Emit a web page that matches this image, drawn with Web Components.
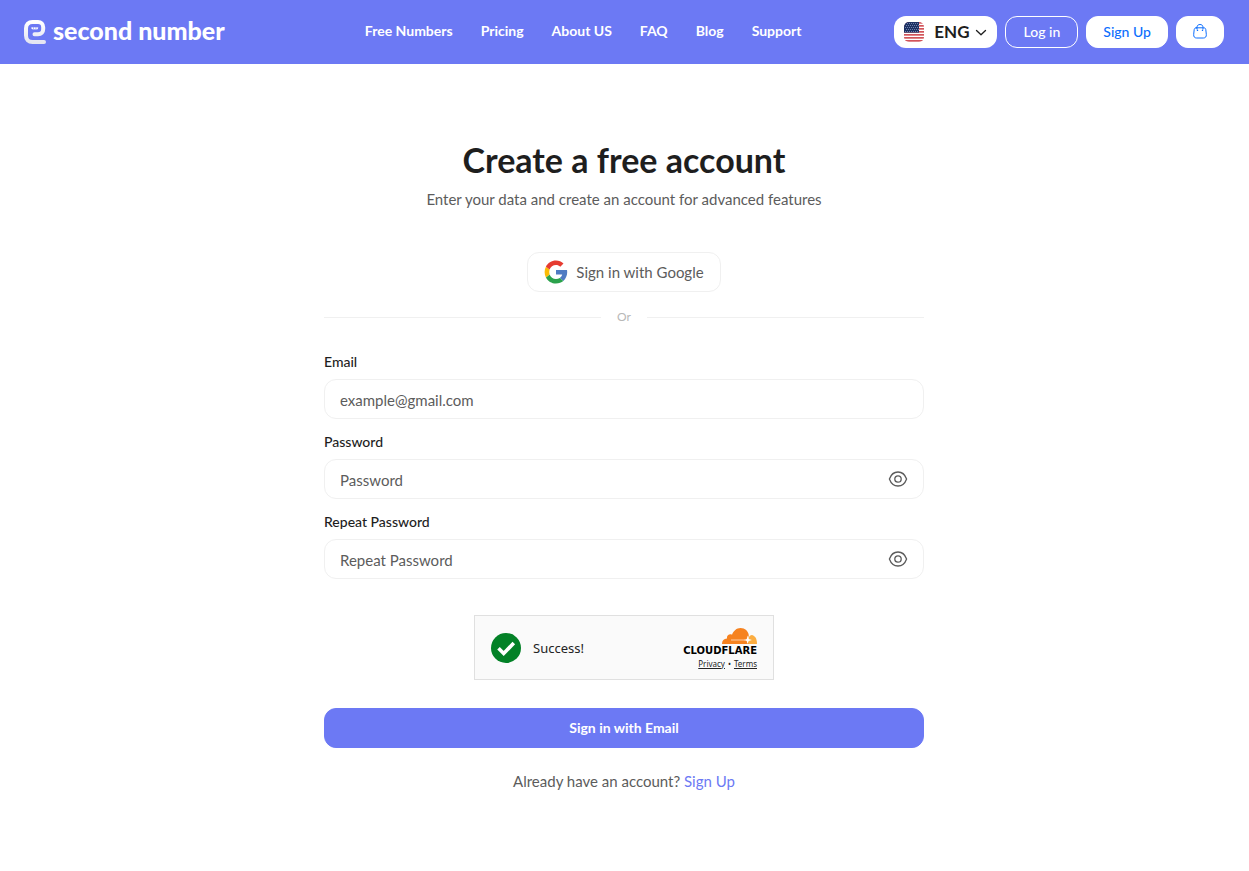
<!DOCTYPE html>
<html lang="en">
<head>
<meta charset="UTF-8">
<meta name="viewport" content="width=device-width, initial-scale=1">
<title>Create a free account</title>
<style>
    :root {
        --primary: #6c79f4;
        --link: #0d6efd;
        --text: #1e1e1e;
        --muted: #5c5c5c;
        --border: #f0f0f0;
        --radius: 12px;
    }

    body {
        margin: 0;
        background: #fff;
        color: var(--text);
        font-family: Lato, "Liberation Sans", sans-serif;
        font-size: 15px;
        font-weight: 400;
        line-height: 20px;
    }
</style>
</head>
<body>
<site-header>
    <a href="#numbers">Free Numbers</a>
    <a href="#pricing">Pricing</a>
    <a href="#about">About US</a>
    <a href="#faq">FAQ</a>
    <a href="#blog">Blog</a>
    <a href="#support">Support</a>
</site-header>
<sign-up-page>
    <span slot="title">Create a free account</span>
    <span slot="subtitle">Enter your data and create an account for advanced features</span>
</sign-up-page>

<script>
// ==================== SiteLogo ====================

class SiteLogo extends HTMLElement {
    constructor() {
        super();
        this.attachShadow({ mode: 'open' });
        this.shadowRoot.innerHTML = `
            <style>
                :host { display: block; }
                a {
                    display: flex;
                    align-items: center;
                    gap: 7px;
                    color: #fff;
                    font-size: 25px;
                    font-weight: 900;
                    line-height: 32px;
                    text-decoration: none;
                    white-space: nowrap;
                }
                svg { flex: none; }
                span { padding-bottom: 4px; }
            </style>
            <a href="#home">
                <svg width="22" height="24" viewBox="0 0 22 24" fill="none" aria-hidden="true">
                    <defs>
                        <linearGradient id="mark" x1="0" y1="0" x2="0" y2="1">
                            <stop offset="0" stop-color="#fff"/>
                            <stop offset="1" stop-color="#e4e5f2"/>
                        </linearGradient>
                    </defs>
                    <path d="M20 22H8.500C4.500 22 2 19.500 2 15.500V8.500C2 4.500 4.500 2 8.500 2H14C17 2 19.200 4.200 19.200 7.300V9C19.200 12.200 17.200 14.300 14 14.300H10.500" stroke="url(#mark)" stroke-width="4" stroke-linecap="round"/>
                    <path d="M7 7.300H14.500L13.300 9.800H8.500Z" fill="#fff" opacity=".5"/>
                    <path d="M7.600 8.300h1.400M10 8.300h1.400M12.400 8.300h1.400" stroke="#fff" stroke-width="1.500"/>
                </svg>
                <span>second number</span>
            </a>
        `;
    }
}

// ==================== LanguageSelect ====================

class LanguageSelect extends HTMLElement {
    constructor() {
        super();
        this.attachShadow({ mode: 'open' });

        let stripes = '';
        for (let i = 0; i < 7; i++) {
            stripes += `<rect y="${i * 3}" width="20" height="1.7" fill="#d2545a"/>`;
        }
        let stars = '';
        for (let y = 1; y < 10; y += 2) {
            for (let x = y % 4 === 1 ? 1 : 2; x < 15; x += 2) {
                stars += `<rect x="${x}" y="${y}" width="1" height="1"/>`;
            }
        }

        this.shadowRoot.innerHTML = `
            <style>
                :host {
                    display: flex;
                    align-items: center;
                    box-sizing: border-box;
                    width: 103px;
                    height: 32px;
                    padding: 0 10px;
                    border-radius: var(--radius);
                    background: #fff;
                }
                svg { flex: none; pointer-events: none; }
                select {
                    flex: 1;
                    min-width: 0;
                    height: 32px;
                    margin: 0;
                    padding: 0 0 0 10px;
                    border: 0;
                    appearance: none;
                    background: none;
                    color: var(--text);
                    font: inherit;
                    font-size: 17px;
                    font-weight: 700;
                    cursor: pointer;
                }
            </style>
            <svg width="20" height="20" viewBox="0 0 20 20" aria-hidden="true">
                <clipPath id="round"><rect width="20" height="20" rx="5"/></clipPath>
                <g clip-path="url(#round)">
                    <rect width="20" height="20" fill="#fff"/>
                    ${stripes}
                    <rect width="15" height="10.600" fill="#1d3264"/>
                    <g fill="#6f80ad">${stars}</g>
                </g>
            </svg>
            <select aria-label="Language">
                <option>ENG</option>
            </select>
            <svg width="12" height="12" viewBox="0 0 12 12" fill="none" aria-hidden="true">
                <path d="M1.500 4.500 6 8.800 10.500 4.500" stroke="#1e1e1e" stroke-width="1.300" stroke-linecap="round" stroke-linejoin="round"/>
            </svg>
        `;
    }
}

// ==================== SiteHeader ====================

class SiteHeader extends HTMLElement {
    constructor() {
        super();
        this.attachShadow({ mode: 'open' });
        this.shadowRoot.innerHTML = `
            <style>
                :host { display: block; background: var(--primary); }
                header {
                    display: flex;
                    align-items: center;
                    justify-content: space-between;
                    gap: 16px;
                    min-height: 64px;
                    padding: 0 25px 0 24px;
                }
                site-logo { min-width: 248px; }
                nav {
                    display: flex;
                    gap: 28px;
                    padding-bottom: 2px;
                }
                ::slotted(a) {
                    color: #fff;
                    font-size: 14px;
                    font-weight: 700;
                    text-decoration: none;
                    white-space: nowrap;
                }
                .actions {
                    display: flex;
                    gap: 8px;
                }
                .btn {
                    display: flex;
                    align-items: center;
                    justify-content: center;
                    box-sizing: border-box;
                    min-width: 48px;
                    height: 32px;
                    padding: 0 16px;
                    border: 1px solid #fff;
                    border-radius: var(--radius);
                    background: #fff;
                    color: var(--link);
                    font: inherit;
                    font-size: 14px;
                    font-weight: 500;
                    text-decoration: none;
                    white-space: nowrap;
                    cursor: pointer;
                }
                .outline {
                    min-width: 73px;
                    background: transparent;
                    color: #fff;
                }
            </style>
            <header>
                <site-logo></site-logo>
                <nav><slot></slot></nav>
                <div class="actions">
                    <language-select></language-select>
                    <a class="btn outline" href="#login">Log in</a>
                    <a class="btn" href="#signup">Sign Up</a>
                    <button class="btn" type="button" aria-label="Cart">
                        <svg width="14" height="16" viewBox="0 0 14 16" fill="none" stroke="currentColor" stroke-linecap="round" stroke-linejoin="round">
                            <path d="M3.200 3.800H10.800C12 3.800 12.600 4.500 12.800 5.600L13.300 10.300C13.500 12.800 12.500 14 10.300 14H3.700C1.500 14 .5 12.800 .7 10.300L1.200 5.600C1.400 4.500 2 3.800 3.200 3.800Z"/>
                            <path d="M4 5V3.400C4 1.500 5.200.5 7 .5S10 1.500 10 3.400V5"/>
                            <path d="M4.500 6.200v.2M9.500 6.200v.2" stroke-width="1.400"/>
                        </svg>
                    </button>
                </div>
            </header>
        `;
    }
}

// ==================== FormField ====================

class FormField extends HTMLElement {
    connectedCallback() {
        if (this.shadowRoot) return;
        this.attachShadow({ mode: 'open' });
        const type = this.getAttribute('type') || 'text';
        const isPassword = type === 'password';

        this.shadowRoot.innerHTML = `
            <style>
                :host { display: block; }
                label {
                    display: block;
                    margin-bottom: 6px;
                    font-size: 14px;
                    font-weight: 500;
                    line-height: 22px;
                }
                .box {
                    display: flex;
                    align-items: center;
                    box-sizing: border-box;
                    height: 40px;
                    padding: 0 15px;
                    border: 1px solid var(--border);
                    border-radius: var(--radius);
                    background: #fff;
                }
                .box:focus-within { border-color: var(--primary); }
                input {
                    flex: 1;
                    min-width: 0;
                    height: 38px;
                    padding: 2px 0 0;
                    box-sizing: border-box;
                    border: 0;
                    outline: 0;
                    background: none;
                    color: var(--text);
                    font: inherit;
                }
                input::placeholder { color: var(--muted); opacity: 1; }
                button {
                    display: flex;
                    padding: 0;
                    border: 0;
                    background: none;
                    color: var(--muted);
                    cursor: pointer;
                }
            </style>
            <label for="input">${this.getAttribute('label')}</label>
            <div class="box">
                <input id="input" type="${type}" placeholder="${this.getAttribute('placeholder')}">
                ${isPassword ? `
                    <button type="button" aria-label="Show password">
                        <svg width="20" height="20" viewBox="0 0 20 20" fill="none" stroke="currentColor" stroke-width="1.300">
                            <path d="M1.400 10C2.900 5.800 6.100 3 10 3S17.100 5.800 18.600 10C17.100 14.200 13.900 17 10 17S2.900 14.200 1.400 10Z" stroke-linejoin="round"/>
                            <circle cx="10" cy="10" r="3.200"/>
                        </svg>
                    </button>` : ''}
            </div>
        `;

        if (isPassword) {
            const input = this.shadowRoot.querySelector('input');
            this.shadowRoot.querySelector('button').addEventListener('click', () => {
                input.type = input.type === 'password' ? 'text' : 'password';
            });
        }
    }
}

// ==================== CaptchaBox ====================

class CaptchaBox extends HTMLElement {
    constructor() {
        super();
        this.attachShadow({ mode: 'open' });
        this.shadowRoot.innerHTML = `
            <style>
                :host {
                    display: flex;
                    align-items: center;
                    gap: 12px;
                    box-sizing: border-box;
                    width: 300px;
                    height: 65px;
                    padding: 0 16px;
                    border: 1px solid #e0e0e0;
                    background: #fafafa;
                    color: #232323;
                    font-family: "Noto Sans", "Open Sans", sans-serif;
                    font-weight: 400;
                }
                .status { flex: 1; font-size: 13px; }
                .brand {
                    display: flex;
                    flex-direction: column;
                    align-items: flex-end;
                    padding-top: 1px;
                }
                .name {
                    margin-top: 1px;
                    color: #000;
                    font: 700 10px/11px "DejaVu Sans", sans-serif;
                }
                .links {
                    display: flex;
                    gap: 3px;
                    margin-top: 2px;
                    font-size: 8px;
                    line-height: 11px;
                }
                .links a { color: inherit; }
            </style>
            <svg width="30" height="30" viewBox="0 0 30 30" fill="none" aria-hidden="true">
                <circle cx="15" cy="15" r="15" fill="#038127"/>
                <path d="M7.500 15.300 12.700 20.500 22.800 10" stroke="#fff" stroke-width="3.600"/>
            </svg>
            <span class="status">Success!</span>
            <div class="brand">
                <svg width="35" height="16" viewBox="0 0 35 16" aria-hidden="true">
                    <path d="M26 16C25 12 27 7 30 7C33.500 8 35 11 35 16Z" fill="#fbad41"/>
                    <path d="M0 16C-.1 12.700 1.700 10.500 5 10.400C4.500 7.500 7.500 5.400 10 6.800C11.500 2.800 14.500 0 18.500 0C23 0 26.400 3.200 26.800 7.300L25.600 12L26.300 16Z" fill="#f6821f"/>
                    <path d="M9 12H23" stroke="#fcd5b5" stroke-width=".9"/>
                    <path d="M25.800 7.500 26.700 11 30 12 26.700 13 25.500 16 24.700 13 22 12 24.700 11Z" fill="#fff"/>
                </svg>
                <span class="name">CLOUDFLARE</span>
                <span class="links"><a href="#privacy">Privacy</a><span>•</span><a href="#terms">Terms</a></span>
            </div>
        `;
    }
}

// ==================== SignUpPage ====================

class SignUpPage extends HTMLElement {
    constructor() {
        super();
        this.attachShadow({ mode: 'open' });
        this.shadowRoot.innerHTML = `
            <style>
                :host { display: block; padding: 76px 25px 76px 24px; }
                main { max-width: 600px; margin: 0 auto; }
                h1 {
                    margin: 0;
                    font-size: 34px;
                    font-weight: 700;
                    line-height: 40px;
                    text-align: center;
                }
                p {
                    margin: 9px 0 0;
                    color: var(--muted);
                    text-align: center;
                }
                form { display: flex; flex-direction: column; }
                button {
                    height: 40px;
                    border: 1px solid var(--border);
                    border-radius: var(--radius);
                    background: #fff;
                    color: var(--muted);
                    font: inherit;
                    cursor: pointer;
                }
                .google {
                    display: flex;
                    align-items: center;
                    align-self: center;
                    gap: 8px;
                    margin-top: 43px;
                    padding: 0 16px;
                }
                .or {
                    display: flex;
                    align-items: center;
                    gap: 16px;
                    margin: 16px 0 25px;
                    color: #b8b8b8;
                    font-size: 12px;
                    line-height: 18px;
                }
                .or::before,
                .or::after {
                    content: '';
                    flex: 1;
                    height: 1px;
                    background: var(--border);
                }
                .fields { display: grid; gap: 12px; }
                captcha-box { align-self: center; margin-top: 36px; }
                .submit {
                    margin-top: 28px;
                    border-color: var(--primary);
                    background: var(--primary);
                    color: #fff;
                    font-size: 14px;
                    font-weight: 700;
                }
                .foot { margin-top: 23px; }
                .foot a { color: var(--primary); text-decoration: none; }
            </style>
            <main>
                <h1><slot name="title"></slot></h1>
                <p><slot name="subtitle"></slot></p>
                <form>
                    <button class="google" type="button">
                        <svg width="24" height="24" viewBox="0 0 24 24" aria-hidden="true">
                            <path fill="#4f7bc3" d="M23 10H12V14.500H18.200C17.900 16 17 17.200 15.700 18L19.300 21C21.700 18.800 23.200 15.700 23.200 12.300C23.200 11.500 23.100 10.700 23 10Z"/>
                            <path fill="#2ba24c" d="M12 23.500C15 23.500 17.500 22.600 19.300 21L15.700 18C14.700 18.700 13.500 19.100 12 19.100C9 19.100 6.500 17.200 5.600 14.500L1.900 17.400C3.800 21 7.600 23.500 12 23.500Z"/>
                            <path fill="#fbbb05" d="M5.600 14.500C5.100 12.900 5.100 11.200 5.600 9.600L1.900 6.700C.2 10 .2 14 1.900 17.400Z"/>
                            <path fill="#e63b30" d="M12 5C13.600 5 15.100 5.600 16.300 6.700L19.500 3.500C17.500 1.600 14.900.5 12 .5C7.600.5 3.800 3 1.900 6.700L5.600 9.600C6.500 6.900 9 5 12 5Z"/>
                        </svg>
                        Sign in with Google
                    </button>
                    <div class="or">Or</div>
                    <div class="fields">
                        <form-field label="Email" type="email" placeholder="example@gmail.com"></form-field>
                        <form-field label="Password" type="password" placeholder="Password"></form-field>
                        <form-field label="Repeat Password" type="password" placeholder="Repeat Password"></form-field>
                    </div>
                    <captcha-box></captcha-box>
                    <button class="submit" type="submit">Sign in with Email</button>
                </form>
                <p class="foot">Already have an account? <a href="#signup">Sign Up</a></p>
            </main>
        `;
    }

    connectedCallback() {
        this.shadowRoot.querySelector('form').addEventListener('submit', e => e.preventDefault());
    }
}

customElements.define('site-logo', SiteLogo);
customElements.define('language-select', LanguageSelect);
customElements.define('site-header', SiteHeader);
customElements.define('form-field', FormField);
customElements.define('captcha-box', CaptchaBox);
customElements.define('sign-up-page', SignUpPage);
</script>
</body>
</html>
